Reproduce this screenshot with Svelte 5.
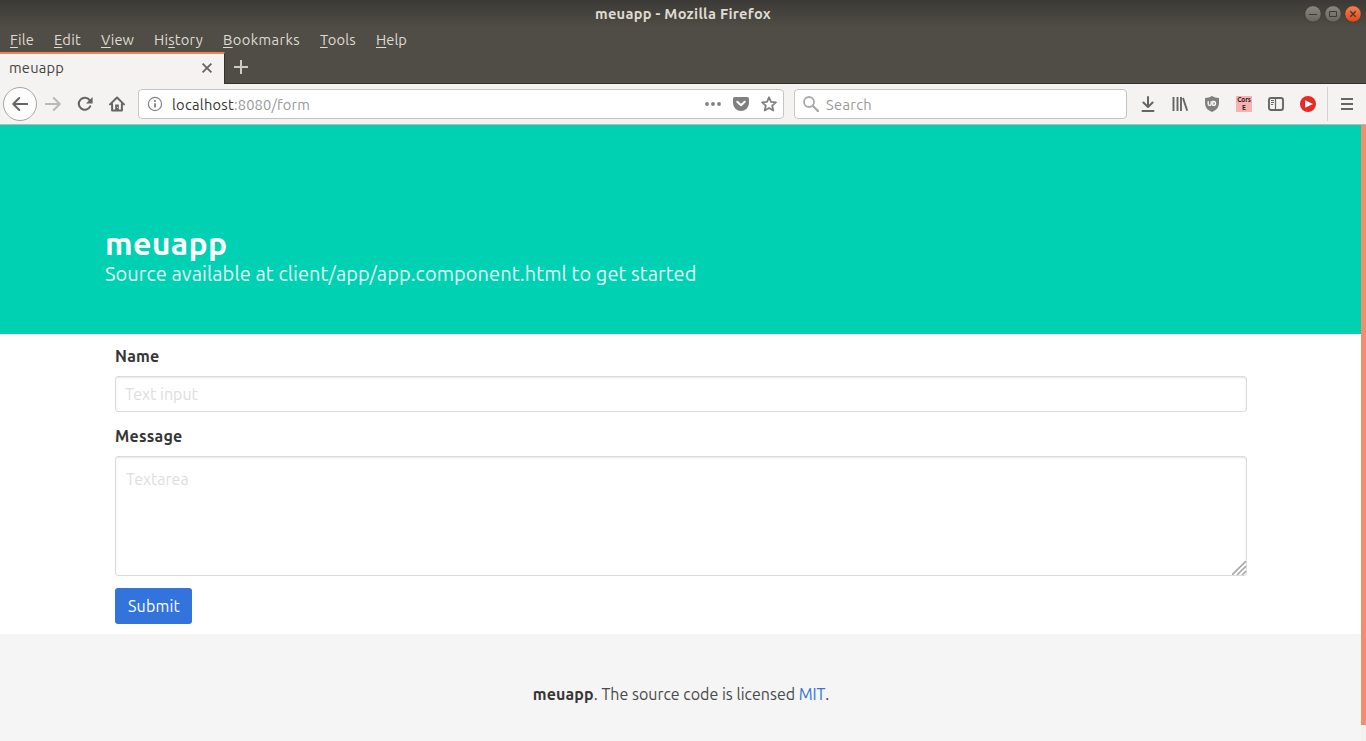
<script>
  const menus = [
    { pre: '', key: 'F', post: 'ile', width: 24 },
    { pre: '', key: 'E', post: 'dit', width: 27 },
    { pre: '', key: 'V', post: 'iew', width: 33 },
    { pre: 'Hi', key: 's', post: 'tory', width: 49 },
    { pre: '', key: 'B', post: 'ookmarks', width: 77 },
    { pre: '', key: 'T', post: 'ools', width: 36 },
    { pre: '', key: 'H', post: 'elp', width: 31 }
  ];

  // Spreads the letters of a text so that it takes the given width.
  function tracked(node, width) {
    const natural = node.getBoundingClientRect().width;
    node.style.letterSpacing = `${(width - natural) / node.textContent.length}px`;
  }
</script>

<div class="window">
  <header class="chrome">
    <div class="titlebar">
      <strong use:tracked={176}>meuapp - Mozilla Firefox</strong>
      <div class="controls">
        <svg width="60" height="20" viewBox="0 0 60 20">
          <defs>
            <linearGradient id="grey" x1="0" y1="0" x2="0" y2="1"><stop offset="0" stop-color="#8b887f" /><stop offset="1" stop-color="#66645d" /></linearGradient>
            <linearGradient id="red" x1="0" y1="0" x2="0" y2="1"><stop offset="0" stop-color="#f58057" /><stop offset="1" stop-color="#dd4814" /></linearGradient>
          </defs>
          <g stroke="#33322d" stroke-width=".6">
            <circle cx="10" cy="10" r="8.2" fill="url(#grey)" />
            <circle cx="30" cy="10" r="8.2" fill="url(#grey)" />
            <circle cx="50" cy="10" r="8.2" fill="url(#red)" />
          </g>
          <g fill="none" stroke="#3c3b37">
            <path d="M6 10.5h8" />
            <path d="M26.5 7.5h7v5h-7z" />
            <path d="M47.3 7.3l5.4 5.4m0-5.4l-5.4 5.4" stroke-width="1.4" />
          </g>
        </svg>
      </div>
    </div>
    <nav class="menubar">
      {#each menus as m}
        <span class="menu"><span use:tracked={m.width}>{m.pre}<u>{m.key}</u>{m.post}</span></span>
      {/each}
    </nav>
    <div class="tabs">
      <div class="tab">
        <span use:tracked={55}>meuapp</span>
        <svg width="12" height="12" viewBox="0 0 12 12"><path d="M1.6 1.6l8.8 8.8m0-8.8l-8.8 8.8" stroke="#666563" stroke-width="1.8" fill="none" /></svg>
      </div>
      <svg class="plus" width="14" height="14" viewBox="0 0 14 14"><path d="M7 0v14M0 7h14" stroke="#cdcbc5" stroke-width="2" /></svg>
    </div>
  </header>

  <div class="toolbar">
    <span class="back"><svg width="16" height="16" viewBox="0 0 16 16"><path d="M15.2 8H1.5M7.2 2L1.3 8l5.9 6" fill="none" stroke="#666563" stroke-width="2" stroke-linecap="round" stroke-linejoin="round" /></svg></span>
    <span class="tool"><svg width="16" height="16" viewBox="0 0 16 16"><path d="M.8 8h13.7M8.8 2l5.9 6-5.9 6" fill="none" stroke="#bab9b7" stroke-width="2" stroke-linecap="round" stroke-linejoin="round" /></svg></span>
    <span class="tool"><svg width="16" height="16" viewBox="0 0 16 16"><path d="M13.2 10.4A6 6 0 1 1 12.6 4.2" fill="none" stroke="#666563" stroke-width="2.1" stroke-linecap="round" /><path d="M15.6 1v6.6H9z" fill="#666563" /></svg></span>
    <span class="tool"><svg width="16" height="16" viewBox="0 0 16 16"><path d="M1 8.4L8 1.5l7 6.9M3.1 8v6.5h9.8V8" fill="none" stroke="#666563" stroke-width="2" stroke-linecap="round" stroke-linejoin="round" /><path d="M6.2 14V8.5h3.6V14z" fill="#666563" /><circle cx="8.7" cy="11.4" r=".5" fill="#fff" /></svg></span>

    <div class="urlbar">
      <svg width="16" height="16" viewBox="0 0 16 16"><circle cx="8" cy="8" r="6.6" fill="none" stroke="#858585" stroke-width="1.2" /><path d="M8 7.2v4.2" stroke="#777" stroke-width="1.7" /><circle cx="8" cy="4.9" r="1" fill="#777" /></svg>
      <div class="url"><span class="host" use:tracked={62}>localhost</span><span class="path" use:tracked={76}>:8080/form</span></div>
      <div class="actions">
        <svg width="16" height="16" viewBox="0 0 16 16" fill="#808080"><circle cx="2" cy="8" r="1.9" /><circle cx="8" cy="8" r="1.9" /><circle cx="14" cy="8" r="1.9" /></svg>
        <svg width="16" height="16" viewBox="0 0 16 16"><path d="M1.8 1h12.4A1.8 1.8 0 0 1 16 2.8V7A8 8 0 0 1 0 7V2.8A1.8 1.8 0 0 1 1.8 1z" fill="#808080" /><path d="M4.3 5.7L8 9.3l3.7-3.6" fill="none" stroke="#fff" stroke-width="2" stroke-linecap="round" stroke-linejoin="round" /></svg>
        <svg width="16" height="16" viewBox="0 0 16 16"><path d="M8 1.3l2 4.5 4.9.5-3.7 3.3 1.1 4.9L8 12l-4.3 2.5 1.1-4.9L1.100 6.300 6 5.800z" fill="none" stroke="#808080" stroke-width="1.8" stroke-linejoin="round" /></svg>
      </div>
    </div>

    <div class="searchbar">
      <svg width="16" height="16" viewBox="0 0 16 16"><circle cx="6" cy="6" r="5" fill="none" stroke="#a9a9a9" stroke-width="1.8" /><path d="M9.7 9.7l5.4 5.4" stroke="#a9a9a9" stroke-width="2.2" stroke-linecap="round" /></svg>
      <span class="hint" use:tracked={46}>Search</span>
    </div>

    <div class="extras">
      <svg width="16" height="16" viewBox="0 0 16 16"><path d="M8 1v9M3.4 6.5L8 11l4.6-4.5M2.5 15h11" fill="none" stroke="#666563" stroke-width="2" stroke-linecap="round" stroke-linejoin="round" /></svg>
      <svg width="16" height="16" viewBox="0 0 16 16"><path d="M1.5 1v14M5.5 1v14M9 1v14M11 2l4.2 12.8" fill="none" stroke="#666563" stroke-width="1.9" /></svg>
      <svg width="16" height="16" viewBox="0 0 16 16"><path d="M8 0c2 1.3 4.5 1.9 7 2v5c0 4.500-3 7.500-7 9-4-1.500-7-4.500-7-9V2c2.500-.1 5-.7 7-2z" fill="#808080" /><path d="M4.200 5.300v2.600a1.500 1.500 0 0 0 3 0V5.300" fill="none" stroke="#fff" stroke-width="1.3" /><path d="M8.800 5.500h.8a1.900 1.900 0 0 1 0 3.800h-.8z" fill="none" stroke="#fff" stroke-width="1.3" /></svg>
      <span class="cors">Cors<br />E</span>
      <svg width="16" height="16" viewBox="0 0 16 16"><rect x="1" y="2" width="14" height="12" rx="2" fill="none" stroke="#666563" stroke-width="1.9" /><path d="M7.5 2v12" stroke="#666563" stroke-width="1.2" /><path d="M3 4.500h3M3 6.500h3M3 8.500h2.200" stroke="#666563" /></svg>
      <svg width="16" height="16" viewBox="0 0 16 16"><circle cx="8" cy="8" r="8" fill="#e62b27" /><path d="M5.2 4.3L13 8l-7.8 3.7z" fill="#fff" /></svg>
      <i class="rule"></i>
      <svg width="12" height="16" viewBox="0 0 12 16"><path d="M0 3h12M0 8h12M0 13h12" stroke="#666563" stroke-width="2" /></svg>
    </div>
  </div>

  <div class="viewport">
    <main>
      <section class="hero">
        <h1><span use:tracked={122.5}>meuapp</span></h1>
        <h2><span use:tracked={591.5}>Source available at client/app/app.component.html to get started</span></h2>
      </section>
      <form onsubmit={(e) => e.preventDefault()}>
        <label for="name"><span use:tracked={44.5}>Name</span></label>
        <input id="name" type="text" placeholder="Text input" />
        <label for="message"><span use:tracked={67.5}>Message</span></label>
        <div class="area">
          <textarea id="message" placeholder="Textarea"></textarea>
          <svg class="grip" width="14" height="14" viewBox="0 0 14 14"><path d="M0 14L14 0M5 14l9-9M10 14l4-4" stroke="#a8a8a8" stroke-width="1.6" /></svg>
        </div>
        <button><span use:tracked={52}>Submit</span></button>
      </form>
      <footer>
        <p><strong use:tracked={61}>meuapp</strong><span use:tracked={205}>. The source code is licensed&nbsp;</span><a href="#mit" use:tracked={26.5}>MIT</a><span>.</span></p>
      </footer>
    </main>
    <div class="scroll"><i></i></div>
  </div>
</div>

<style>
  :global(body) { margin: 0; overflow: hidden; }
  * { box-sizing: border-box; }
  svg { display: block; flex: none; }
  .window { width: 1366px; height: 741px; display: flex; flex-direction: column; overflow: hidden; font: 14.667px/20px "Ubuntu", "Noto Sans", sans-serif; white-space: nowrap; background: #fff; }
  .chrome { height: 84px; flex: none; background: linear-gradient(#3b3a36, #504d46 28px); color: #dfdbd2; }
  .titlebar { height: 28px; display: grid; grid-template-columns: 1fr auto 1fr; align-items: center; }
  .titlebar strong { grid-column: 2; font-weight: 700; }
  .controls { justify-self: end; padding-right: 3px; }
  .menubar { height: 24px; display: flex; align-items: center; gap: 20px; padding-left: 10px; }
  .menu { flex: none; }
  u { text-decoration: underline; text-decoration-thickness: 1px; text-underline-offset: 2px; }
  .tabs { height: 32px; display: flex; align-items: center; border-bottom: 1px solid #33322e; }
  .tab { width: 225px; height: 32px; margin-bottom: -1px; padding: 0 11px 2px 9px; display: flex; align-items: center; justify-content: space-between; background: #f4f3f1; border-top: 2px solid #f48155; border-right: 1px solid #33322e; color: #44433f; }
  .plus { margin: -1px 0 0 9px; }
  .toolbar { height: 41px; flex: none; display: flex; align-items: center; padding: 0 13px 1px 3px; background: #f4f3f1; border-bottom: 1px solid #b9b8b5; }
  .back { width: 34px; height: 34px; display: grid; place-items: center; border: 1px solid #a7a6a4; border-radius: 50%; background: #fdfdfd; }
  .tool { width: 32px; display: grid; place-items: center; }
  .urlbar, .searchbar { height: 30px; display: flex; align-items: center; border: 1px solid #c5c4c1; border-radius: 4px; background: #fff; }
  .urlbar { width: 646px; margin-left: 5px; padding: 0 6px 0 8px; }
  .url { margin-left: 9px; padding-top: 2px; display: flex; flex: 1; }
  .host { color: #333; }
  .path { color: #999; }
  .actions { display: flex; gap: 12px; }
  .searchbar { width: 333px; margin-left: 10px; padding-left: 8px; gap: 7px; color: #999; }
  .hint { padding-top: 2px; }
  .extras { flex: 1; height: 40px; display: flex; align-items: center; gap: 16px; margin-left: 13px; }
  .cors { width: 16px; height: 16px; background: #f7b1b0; color: #222; font: bold 6.5px/8px "Ubuntu", "Noto Sans", sans-serif; text-align: center; }
  .rule { width: 1px; height: 34px; margin: 0 -3px 0 -5px; background: #d4d3d0; }
  .viewport { flex: 1; display: flex; min-height: 0; }
  main { width: 1361px; display: flex; flex-direction: column; }
  .hero { height: 209px; padding: 100px 0 0 105px; background: #00d1b2; color: #fff; }
  h1, h2, p { margin: 0; }
  h1 { margin-bottom: 2px; font-size: 32px; line-height: 36px; font-weight: 700; }
  h2 { font-size: 20px; line-height: 22px; font-weight: 400; color: #e0faf6; }
  form { height: 300px; display: flex; flex-direction: column; align-items: flex-start; padding: 10px 114px 0 115px; }
  label { height: 24px; margin-bottom: 8px; font-size: 16px; line-height: 24px; font-weight: 700; color: #363636; }
  input, textarea { display: block; width: 1132px; border: 1px solid #dbdbdb; border-radius: 3px; background: #fff; box-shadow: inset 0 1px 2px rgba(10, 10, 10, .1); font: 16px/24px "Ubuntu", "Noto Sans", sans-serif; outline: none; }
  input { height: 36px; margin-bottom: 12px; padding: 5px 9px; }
  textarea { height: 120px; padding: 10px; resize: none; }
  input::placeholder, textarea::placeholder { color: #dedede; opacity: 1; }
  .area { position: relative; margin-bottom: 12px; }
  .grip { position: absolute; right: 1px; bottom: 1px; }
  button { width: 77px; height: 36px; padding: 0 0 0 1px; border: 0; border-radius: 3px; background: #3273dc; color: #fff; font: 16px/24px "Ubuntu", "Noto Sans", sans-serif; }
  footer { flex: 1; padding: 48px 0 0 1px; background: #f5f5f5; color: #4a4a4a; font-size: 16px; line-height: 24px; }
  footer p { display: flex; justify-content: center; }
  footer strong { color: #363636; }
  a { color: #3273dc; text-decoration: none; }
  .scroll { width: 5px; background: #f2f1f0; }
  .scroll i { display: block; height: 600px; background: #f08f69; }
</style>
